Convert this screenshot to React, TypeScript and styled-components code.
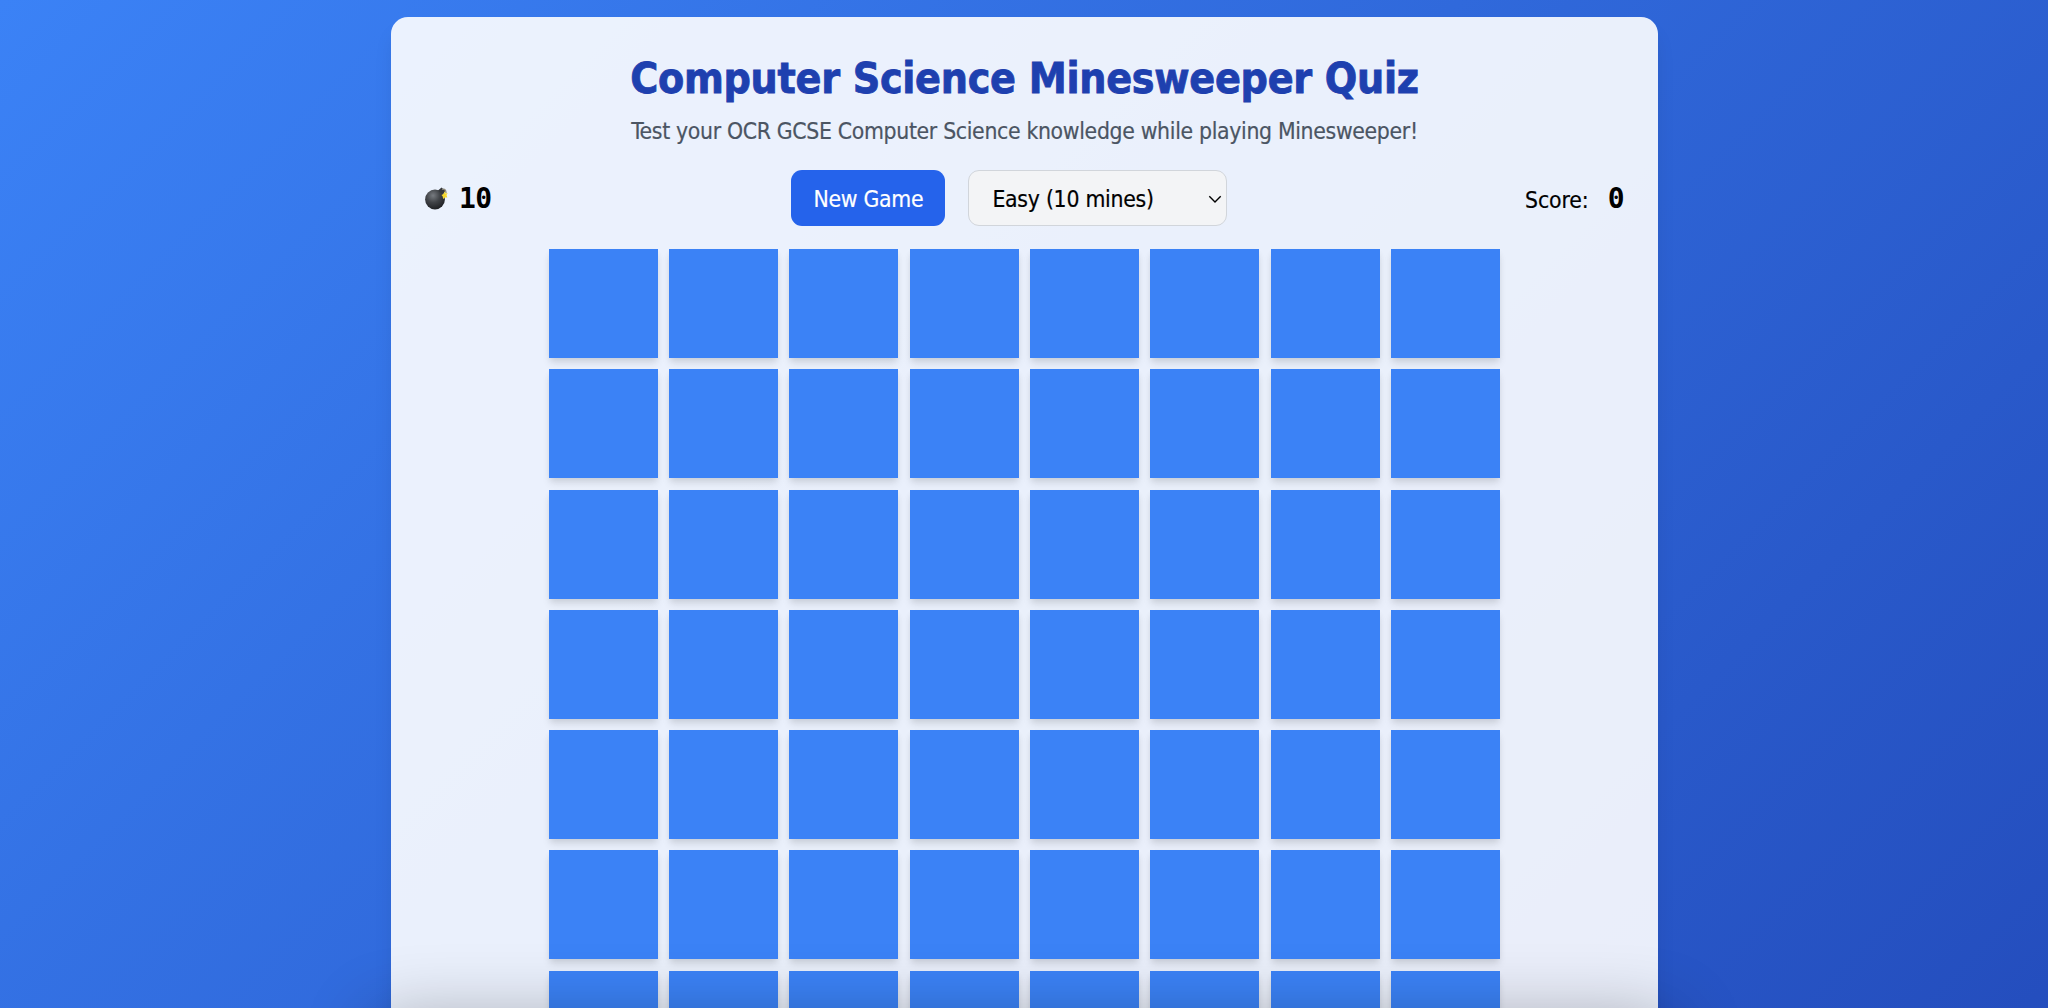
import React from "react";
import styled, { createGlobalStyle } from "styled-components";

const Global = createGlobalStyle`
  *, *::before, *::after { box-sizing: border-box; }
  html, body { margin: 0; height: 100%; overflow: hidden; }
  body { font-family: "DejaVu Sans Condensed", "DejaVu Sans", sans-serif; font-stretch: condensed; font-size: 22.75px; color: #000; }
`;
const Page = styled.div`
  height: 1008px;
  overflow: hidden;
  display: flex;
  justify-content: center;
  align-items: flex-start;
  padding: 17px 0 0 1px;
  background: linear-gradient(135deg, #3b82f6 0%, #1e40af 100%);
  background-size: 2048px 1800px;
  position: relative;
`;
const Card = styled.main`
  width: 1267px;
  height: 1240px;
  flex: none;
  padding: 34px 34px 34px 33px;
  border-radius: 17px;
  background: rgba(255, 255, 255, 0.9);
  box-shadow: 0 14px 21px -4px rgba(0, 0, 0, 0.1);
`;
const Title = styled.h1`
  margin: 2px 0 10px;
  padding-left: 1px;
  font-size: 42.5px;
  line-height: 51px;
  font-weight: 700;
  letter-spacing: -0.3px;
  -webkit-text-stroke: 0.8px #1e40af;
  text-align: center;
  white-space: nowrap;
  color: #1e40af;
`;
const Subtitle = styled.p`
  margin: 0 0 21px;
  padding-left: 1px;
  line-height: 34px;
  letter-spacing: -0.32px;
  -webkit-text-stroke: 0.2px #4b5563;
  text-align: center;
  white-space: nowrap;
  color: #4b5563;
`;
const Toolbar = styled.div`
  display: flex;
  align-items: center;
  justify-content: space-between;
  height: 58px;
  margin-bottom: 22px;
`;
const Group = styled.div<{ $gap: number; $inset?: number }>`
  display: flex;
  align-items: center;
  gap: ${(p) => p.$gap}px;
  padding-left: ${(p) => p.$inset ?? 0}px;
`;
const Count = styled.span`
  font-family: "DejaVu Sans Mono", monospace;
  font-size: 28px;
  font-weight: 700;
  letter-spacing: -0.5px;
`;
const Label = styled.span`
  padding-top: 3px;
  letter-spacing: -0.1px;
  -webkit-text-stroke: 0.2px #000;
`;
const NewGame = styled.button`
  width: 154px;
  height: 56px;
  border: 0;
  padding: 1px 0 0;
  border-radius: 11px;
  background: #2563eb;
  color: #fff;
  font: inherit;
  letter-spacing: -0.3px;
  -webkit-text-stroke: 0.2px #fff;
`;
const Level = styled.button`
  display: flex;
  align-items: center;
  justify-content: space-between;
  width: 259px;
  height: 56px;
  padding: 2px 4px 0 23px;
  border: 1px solid #d1d5db;
  border-radius: 11px;
  background: #f3f4f6;
  color: #000;
  font: inherit;
  letter-spacing: -0.25px;
  -webkit-text-stroke: 0.2px #000;
`;
const Board = styled.div`
  display: grid;
  grid-template-columns: repeat(8, 109px);
  grid-auto-rows: 109px;
  column-gap: 11.3px;
  row-gap: 11.25px;
  justify-content: center;
  padding-left: 0.7px;
`;
const Tile = styled.div`
  background: #3b82f6;
  box-shadow: 0 6px 8px -1px rgba(0, 0, 0, 0.1), 0 3px 6px -1px rgba(0, 0, 0, 0.06);
`;
const BottomShade = styled.div`
  position: absolute;
  left: 375px;
  right: 375px;
  top: 1018px;
  height: 100px;
  box-shadow: 0 0 70px rgba(0, 0, 0, 0.3);
`;

const Bomb = () => (
  <svg width="24" height="24" viewBox="0 0 24 24">
    <defs>
      <radialGradient id="bomb" cx="40%" cy="30%" r="70%">
        <stop offset="0" stopColor="#777b80" />
        <stop offset=".5" stopColor="#414448" />
        <stop offset="1" stopColor="#202225" />
      </radialGradient>
    </defs>
    <circle cx="11" cy="13.5" r="9.9" fill="url(#bomb)" />
    <path d="M14 4.5 17.5 1.5 21.5 5 19 8.5Z" fill="#35383c" />
    <path d="M18 3.5Q22 2 22 7" fill="none" stroke="#8b8574" strokeWidth="1.3" />
    <path d="m21 5 .4 2.4L23.7 7l-1.2 2.1.8 2.3-2.5.2-1.7 1.3-.4-2.5-1.2-1.5 2-1Z" fill="#f5d82e" />
  </svg>
);

const Chevron = () => (
  <svg width="14" height="9" viewBox="0 0 14 9" fill="none" stroke="#000" strokeWidth="1.4">
    <path d="m1.3 1.2 5.7 5.7 5.7-5.7" />
  </svg>
);

export default function App() {
  return (
    <>
      <Global />
      <Page>
        <Card>
          <Title>Computer Science Minesweeper Quiz</Title>
          <Subtitle>Test your OCR GCSE Computer Science knowledge while playing Minesweeper!</Subtitle>
          <Toolbar>
            <Group $gap={11}>
              <Bomb />
              <Count>10</Count>
            </Group>
            <Group $gap={23} $inset={2}>
              <NewGame>New Game</NewGame>
              <Level>
                Easy (10 mines)
                <Chevron />
              </Level>
            </Group>
            <Group $gap={19}>
              <Label>Score:</Label>
              <Count>0</Count>
            </Group>
          </Toolbar>
          <Board>
            {Array.from({ length: 64 }, (_, i) => (
              <Tile key={i} />
            ))}
          </Board>
        </Card>
        <BottomShade />
      </Page>
    </>
  );
}
